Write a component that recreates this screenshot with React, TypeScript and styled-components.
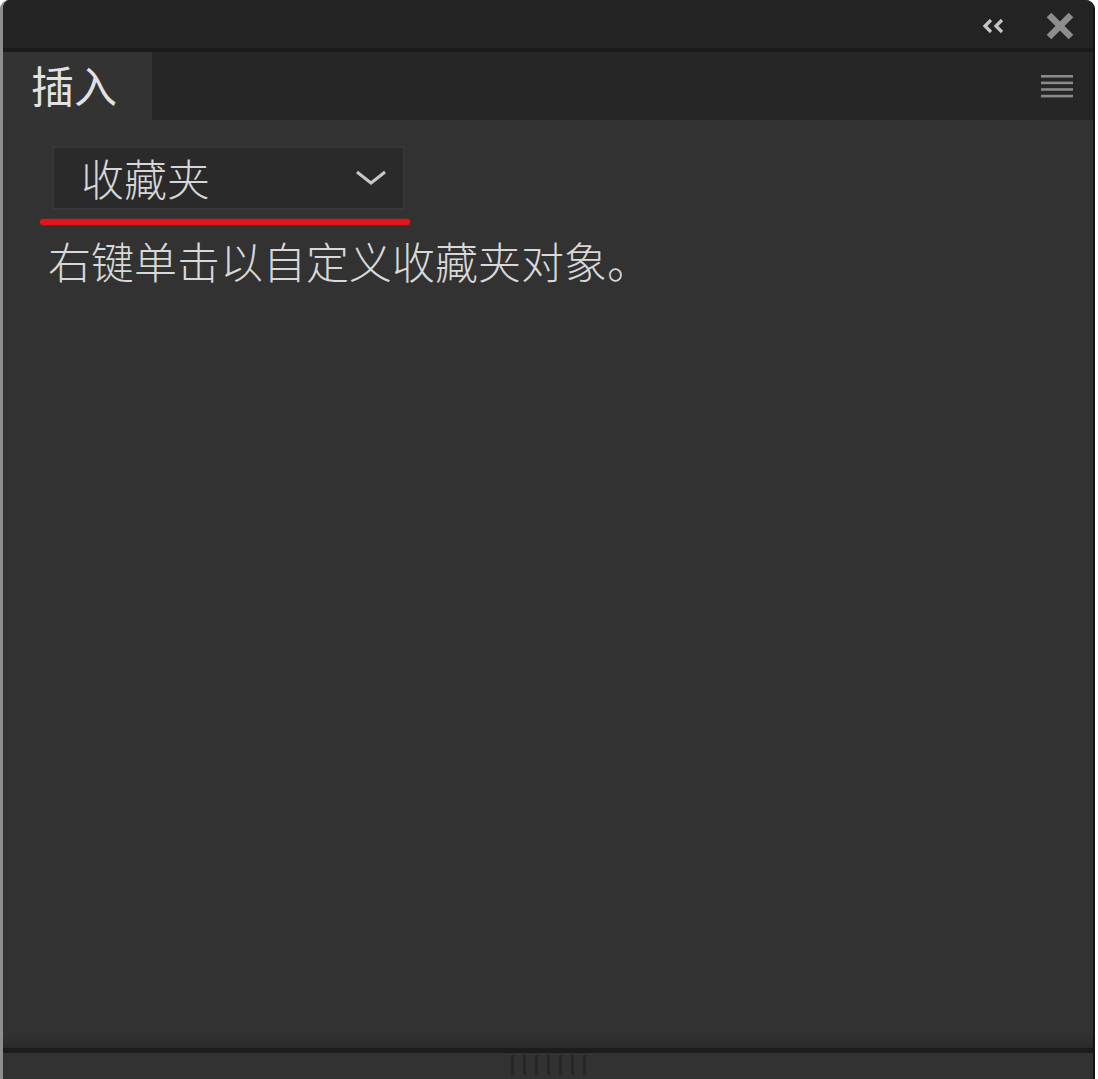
import React from "react";
import styled, { createGlobalStyle } from "styled-components";

const Global = createGlobalStyle`
  html, body { margin: 0; padding: 0; background: #ffffff; }
  #root { width: 100vw; height: 100vh; }
  * { box-sizing: border-box; }
`;

const Page = styled.div`
  width: 1098px;
  height: 1079px;
  background: #ffffff;
  padding-right: 3px;
  display: flex;
`;

const Panel = styled.div`
  flex: 1;
  display: flex;
  flex-direction: column;
  background: #323232;
  border-left: 3px solid #8e8e8e;
  border-right: 2px solid #141414;
  border-top-left-radius: 9px;
  border-top-right-radius: 9px;
  overflow: hidden;
  font-family: "Noto Sans CJK SC", "Noto Sans", sans-serif;
  font-weight: 300;
`;

const TitleBar = styled.div`
  height: 52px;
  flex: none;
  background: #232323;
  border-bottom: 4px solid #1b1b1b;
  display: flex;
  align-items: center;
  justify-content: flex-end;
  padding-top: 4px;
  padding-right: 19px;
  gap: 40px;
`;

const IconButton = styled.div`
  display: flex;
  align-items: center;
  justify-content: center;
`;

const TabRow = styled.div`
  height: 68px;
  flex: none;
  background: #262626;
  display: flex;
  align-items: stretch;
  justify-content: space-between;
`;

const Tab = styled.div`
  width: 149px;
  background: #333333;
  color: #e2e2e2;
  font-size: 43px;
  font-weight: 400;
  line-height: 1;
  display: flex;
  align-items: center;
  padding-left: 28px;
  padding-bottom: 4px;
`;

const MenuButton = styled.div`
  display: flex;
  align-items: center;
  padding-right: 20px;
`;

const Content = styled.div`
  flex: 1;
  display: flex;
  flex-direction: column;
  align-items: flex-start;
  padding-top: 26px;
  background: linear-gradient(to bottom, #323232 0, #323232 calc(100% - 14px), #2a2a2a 100%);
`;

const Select = styled.div`
  margin-left: 49px;
  width: 353px;
  height: 64px;
  background: #2a2a2a;
  border: 2px solid #373737;
  display: flex;
  align-items: center;
  justify-content: space-between;
  padding-left: 27px;
  padding-right: 16px;
  color: #d6d6d6;
  font-size: 43px;
  line-height: 1;
`;

const SelectLabel = styled.span`
  padding-bottom: 2px;
`;

const Marker = styled.div`
  margin-left: 37px;
  margin-top: 9px;
  width: 370px;
  height: 6px;
  border-radius: 3px;
  background: #e3141a;
  box-shadow: 0 0 2px rgba(230, 20, 26, 0.7);
`;

const Hint = styled.div`
  margin-left: 45px;
  margin-top: 13px;
  color: #d8d8d8;
  font-size: 43px;
  line-height: 44px;
`;

const Footer = styled.div`
  height: 31px;
  flex: none;
  background: #323232;
  border-top: 5px solid #1c1c1c;
  display: flex;
  justify-content: center;
`;

const Grip = styled.div`
  display: flex;
  gap: 9px;
  padding-top: 2px;
`;

const GripLine = styled.div`
  width: 3px;
  height: 20px;
  background: #262626;
`;

export default function App() {
  return (
    <>
      <Global />
      <Page>
        <Panel>
          <TitleBar>
            <IconButton>
              <svg width="24" height="18" viewBox="0 0 24 18">
                <path d="M9 3 L3 9 L9 15" fill="none" stroke="#c4c4c4" strokeWidth="3.2" />
                <path d="M20 3 L14 9 L20 15" fill="none" stroke="#c4c4c4" strokeWidth="3.2" />
              </svg>
            </IconButton>
            <IconButton>
              <svg width="28" height="28" viewBox="0 0 28 28">
                <path d="M3 3 L25 25 M25 3 L3 25" stroke="#8d8d8d" strokeWidth="6.5" />
              </svg>
            </IconButton>
          </TitleBar>
          <TabRow>
            <Tab>插入</Tab>
            <MenuButton>
              <svg width="32" height="24" viewBox="0 0 32 24">
                <rect x="0" y="1" width="32" height="2.6" fill="#8a8a8a" />
                <rect x="0" y="7.6" width="32" height="2.6" fill="#8a8a8a" />
                <rect x="0" y="14.2" width="32" height="2.6" fill="#8a8a8a" />
                <rect x="0" y="20.8" width="32" height="2.6" fill="#8a8a8a" />
              </svg>
            </MenuButton>
          </TabRow>
          <Content>
            <Select>
              <SelectLabel>收藏夹</SelectLabel>
              <svg width="32" height="16" viewBox="0 0 32 16">
                <path d="M2 2 L16 13 L30 2" fill="none" stroke="#c8c8c8" strokeWidth="3" />
              </svg>
            </Select>
            <Marker />
            <Hint>右键单击以自定义收藏夹对象。</Hint>
          </Content>
          <Footer>
            <Grip>
              {Array.from({ length: 7 }).map((_, i) => (
                <GripLine key={i} />
              ))}
            </Grip>
          </Footer>
        </Panel>
      </Page>
    </>
  );
}
